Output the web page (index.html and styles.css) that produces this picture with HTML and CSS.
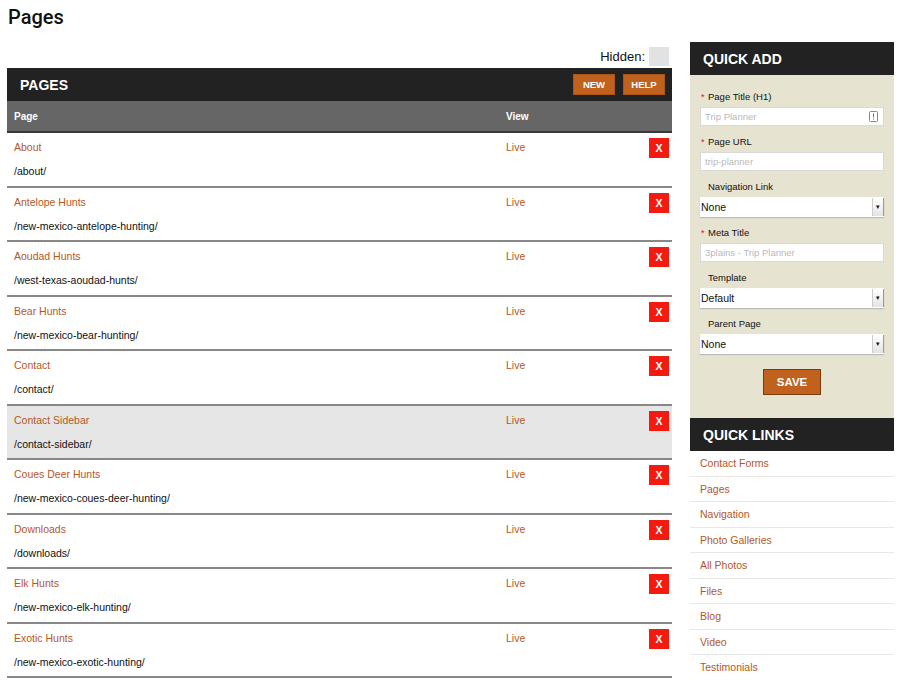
FILE: index.html
```html
<!DOCTYPE html>
<html lang="en">
<head>
    <meta charset="UTF-8">
    <meta name="viewport" content="width=device-width, initial-scale=1.0">
    <title>Pages</title>
    <link rel="stylesheet" href="styles.css">
</head>
<body>
    <h1 class="page_title">Pages</h1>

    <div class="layout">
        <div class="main">
            <div class="hidden_row">
                <span>Hidden:</span>
                <span class="check"></span>
            </div>

            <div class="bar">
                <div class="bar_title">PAGES</div>
                <div class="bar_btns">
                    <a class="btn">NEW</a>
                    <a class="btn">HELP</a>
                </div>
            </div>

            <div class="thead">
                <div class="col_page">Page</div>
                <div class="col_view">View</div>
            </div>

            <div class="rows">
                <div class="row">
                    <div class="col_page"><a class="link">About</a><div class="url">/about/</div></div>
                    <div class="col_view"><a class="link">Live</a></div>
                    <a class="del">X</a>
                </div>
                <div class="row">
                    <div class="col_page"><a class="link">Antelope Hunts</a><div class="url">/new-mexico-antelope-hunting/</div></div>
                    <div class="col_view"><a class="link">Live</a></div>
                    <a class="del">X</a>
                </div>
                <div class="row">
                    <div class="col_page"><a class="link">Aoudad Hunts</a><div class="url">/west-texas-aoudad-hunts/</div></div>
                    <div class="col_view"><a class="link">Live</a></div>
                    <a class="del">X</a>
                </div>
                <div class="row">
                    <div class="col_page"><a class="link">Bear Hunts</a><div class="url">/new-mexico-bear-hunting/</div></div>
                    <div class="col_view"><a class="link">Live</a></div>
                    <a class="del">X</a>
                </div>
                <div class="row">
                    <div class="col_page"><a class="link">Contact</a><div class="url">/contact/</div></div>
                    <div class="col_view"><a class="link">Live</a></div>
                    <a class="del">X</a>
                </div>
                <div class="row hover">
                    <div class="col_page"><a class="link">Contact Sidebar</a><div class="url">/contact-sidebar/</div></div>
                    <div class="col_view"><a class="link">Live</a></div>
                    <a class="del">X</a>
                </div>
                <div class="row">
                    <div class="col_page"><a class="link">Coues Deer Hunts</a><div class="url">/new-mexico-coues-deer-hunting/</div></div>
                    <div class="col_view"><a class="link">Live</a></div>
                    <a class="del">X</a>
                </div>
                <div class="row">
                    <div class="col_page"><a class="link">Downloads</a><div class="url">/downloads/</div></div>
                    <div class="col_view"><a class="link">Live</a></div>
                    <a class="del">X</a>
                </div>
                <div class="row">
                    <div class="col_page"><a class="link">Elk Hunts</a><div class="url">/new-mexico-elk-hunting/</div></div>
                    <div class="col_view"><a class="link">Live</a></div>
                    <a class="del">X</a>
                </div>
                <div class="row">
                    <div class="col_page"><a class="link">Exotic Hunts</a><div class="url">/new-mexico-exotic-hunting/</div></div>
                    <div class="col_view"><a class="link">Live</a></div>
                    <a class="del">X</a>
                </div>
            </div>
        </div>

        <div class="side">
            <div class="bar">
                <div class="bar_title">QUICK ADD</div>
            </div>
            <div class="quick_add">
                <div class="field">
                    <div class="label"><span class="req">*</span>Page Title (H1)</div>
                    <div class="input"><span class="ph">Trip Planner</span>
                        <svg class="ico" width="9" height="11" viewBox="0 0 9 11"><rect x="0.5" y="0.5" width="8" height="10" rx="1" fill="#fff" stroke="#888"/><rect x="4" y="2.5" width="1" height="4" fill="#777"/><rect x="4" y="7.5" width="1" height="1" fill="#777"/></svg>
                    </div>
                </div>
                <div class="field">
                    <div class="label"><span class="req">*</span>Page URL</div>
                    <div class="input"><span class="ph">trip-planner</span></div>
                </div>
                <div class="field">
                    <div class="label"><span class="req"></span>Navigation Link</div>
                    <div class="select"><span>None</span><span class="arrow">&#9662;</span></div>
                </div>
                <div class="field">
                    <div class="label"><span class="req">*</span>Meta Title</div>
                    <div class="input"><span class="ph">3plains - Trip Planner</span></div>
                </div>
                <div class="field">
                    <div class="label"><span class="req"></span>Template</div>
                    <div class="select"><span>Default</span><span class="arrow">&#9662;</span></div>
                </div>
                <div class="field">
                    <div class="label"><span class="req"></span>Parent Page</div>
                    <div class="select"><span>None</span><span class="arrow">&#9662;</span></div>
                </div>
                <div class="save_wrap"><a class="save">SAVE</a></div>
            </div>

            <div class="bar">
                <div class="bar_title">QUICK LINKS</div>
            </div>
            <ul class="quick_links">
                <li><a class="link">Contact Forms</a></li>
                <li><a class="link">Pages</a></li>
                <li><a class="link">Navigation</a></li>
                <li><a class="link">Photo Galleries</a></li>
                <li><a class="link">All Photos</a></li>
                <li><a class="link">Files</a></li>
                <li><a class="link">Blog</a></li>
                <li><a class="link">Video</a></li>
                <li><a class="link">Testimonials</a></li>
            </ul>
        </div>
    </div>
</body>
</html>
```

FILE: styles.css
```css
body{
    margin:0;
    font-family:"Liberation Sans", Arial, sans-serif;
    font-size:10.5px;
    color:#111;
    background:#fff;
}

.page_title{
    margin:0;
    padding:2px 8px 0;
    height:40px;
    font-family:Roboto, "Liberation Sans", sans-serif;
    font-weight:500;
    font-size:20px;
    line-height:30px;
    color:#111;
}

.layout{
    display:flex;
    gap:18px;
    padding:0 6px 0 7px;
}

.main{
    width:665px;
}

.side{
    width:204px;
}

.hidden_row{
    height:26px;
    display:flex;
    justify-content:flex-end;
    align-items:center;
    gap:4px;
    padding-right:3px;
    padding-top:3px;
    font-size:13px;
    box-sizing:border-box;
}

.check{
    width:20px;
    height:19px;
    background:#e2e2e2;
    display:inline-block;
}

.bar{
    height:33px;
    background:#222;
    display:flex;
    align-items:center;
    justify-content:space-between;
    padding:0 7px 0 13px;
}

.bar_title{
    color:#fff;
    font-weight:bold;
    font-size:14px;
}

.bar_btns{
    display:flex;
    gap:8px;
}

.btn{
    width:40px;
    height:19px;
    line-height:19px;
    text-align:center;
    background:#c0621e;
    border:1px solid #a9551a;
    color:#fff;
    font-weight:bold;
    font-size:9.5px;
}

.thead{
    height:30px;
    background:#666;
    border-bottom:2px solid #3a3a3a;
    display:flex;
    align-items:center;
    color:#fff;
    font-weight:bold;
    font-size:10px;
}

.col_page{
    width:492px;
    padding-left:7px;
}

.col_view{
    flex:1;
}

.row{
    height:52.5px;
    border-bottom:2px solid #888;
    display:flex;
    align-items:flex-start;
}

.row.hover{
    background:#e6e6e6;
}

.row .col_page,
.row .col_view{
    padding-top:6px;
}

.link{
    color:#b5581f;
    font-size:10.5px;
    line-height:16px;
    display:block;
}

.url{
    margin-top:8px;
    line-height:16px;
    font-size:10.5px;
    color:#111;
}

.del{
    width:20px;
    height:20px;
    margin:5px 3px 0 0;
    background:#f41a10;
    color:#fff;
    font-weight:bold;
    font-size:10.5px;
    line-height:20px;
    text-align:center;
}

.quick_add{
    background:#e6e3d0;
    padding:15px 10px 23px;
}

.field{
    margin-bottom:9px;
}

.label{
    height:14px;
    line-height:14px;
    font-size:9.5px;
    margin-bottom:3px;
    display:flex;
}

.req{
    width:7px;
    padding-left:1px;
    color:#d0211c;
    font-size:9px;
}

.input{
    height:17px;
    background:#fff;
    border:1px solid #d9d9d9;
    display:flex;
    align-items:center;
    justify-content:space-between;
    padding:0 5px 0 4px;
    font-size:9.5px;
}

.ph{
    color:#b9b9b9;
}

.ico{
    display:block;
}

.select{
    height:20px;
    background:#fff;
    display:flex;
    align-items:center;
    justify-content:space-between;
    font-size:10.5px;
    color:#111;
    padding-left:1px;
    box-shadow:0 1px 1px #bbb;
}

.arrow{
    width:10px;
    height:18px;
    line-height:18px;
    text-align:center;
    font-size:7px;
    background:linear-gradient(#fff, #e4e4e4);
    border-left:1px solid #ccc;
    border-right:1px solid #999;
}

.save_wrap{
    display:flex;
    justify-content:center;
    padding-top:6px;
}

.save{
    width:56px;
    height:24px;
    line-height:24px;
    text-align:center;
    background:#c0621e;
    border:1px solid #7a3d10;
    color:#fff;
    font-weight:bold;
    font-size:11.5px;
}

.quick_links{
    list-style:none;
    margin:0;
    padding:0;
}

.quick_links li{
    height:24.5px;
    border-bottom:1px solid #e8e8e8;
    display:flex;
    align-items:center;
    padding-left:10px;
}
```
